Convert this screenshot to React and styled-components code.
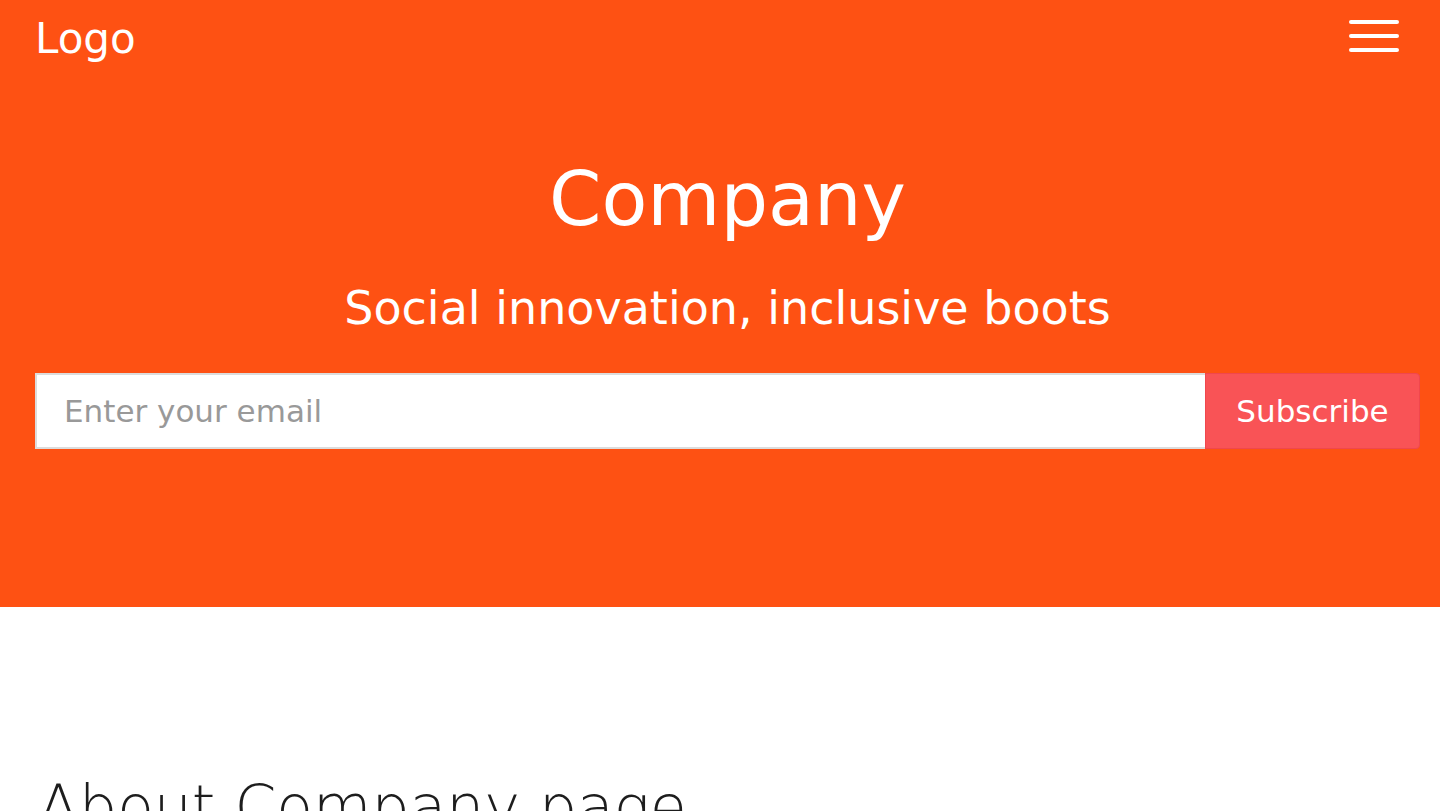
import styled, { createGlobalStyle } from 'styled-components';

const GlobalStyle = createGlobalStyle`
  html, body {
    margin: 0;
    padding: 0;
    background: #ffffff;
    font-family: 'DejaVu Sans', 'Open Sans', sans-serif;
    overflow: hidden;
  }
  * {
    box-sizing: border-box;
  }
`;

function App() {
  return (
    <>
      <GlobalStyle />
      <Hero>
        <NavBar>
          <Logo>Logo</Logo>
          <MenuButton aria-label="Menu">
            <span />
            <span />
            <span />
          </MenuButton>
        </NavBar>
        <HeroContent>
          <Title>Company</Title>
          <Tagline>Social innovation, inclusive boots</Tagline>
          <SubscribeForm onSubmit={(e) => e.preventDefault()}>
            <EmailInput type="email" placeholder="Enter your email" />
            <SubscribeButton type="submit">Subscribe</SubscribeButton>
          </SubscribeForm>
        </HeroContent>
      </Hero>
      <About>
        <AboutTitle>About Company page</AboutTitle>
      </About>
    </>
  );
}

export default App;

const Hero = styled.header`
  background: #fe5113;
  height: 607px;
  padding: 0 20px 0 35px;
  color: #ffffff;
`;

const NavBar = styled.nav`
  display: flex;
  justify-content: space-between;
  align-items: center;
  height: 78px;
  padding-right: 21px;
`;

const Logo = styled.a`
  font-size: 42px;
  line-height: 1;
  font-weight: 400;
  color: #ffffff;
`;

const MenuButton = styled.button`
  display: flex;
  flex-direction: column;
  gap: 10px;
  width: 50px;
  padding: 0;
  background: none;
  border: none;
  margin-top: -6px;

  span {
    display: block;
    height: 4px;
    border-radius: 2px;
    background: #ffffff;
  }
`;

const HeroContent = styled.div`
  display: flex;
  flex-direction: column;
  align-items: center;
  padding-top: 84px;
`;

const Title = styled.h1`
  margin: 0;
  font-size: 75px;
  font-weight: 400;
  line-height: 1;
`;

const Tagline = styled.p`
  margin: 48px 0 0;
  font-size: 46px;
  font-weight: 400;
  line-height: 1;
`;

const SubscribeForm = styled.form`
  display: flex;
  width: 100%;
  margin-top: 42px;
  height: 76px;
`;

const EmailInput = styled.input`
  flex: 1;
  border: 2px solid #dcdcdc;
  border-right: none;
  padding: 0 27px;
  font-family: inherit;
  font-size: 31px;
  font-weight: 400;
  color: #333;
  outline: none;

  &::placeholder {
    color: #999999;
  }
`;

const SubscribeButton = styled.button`
  width: 215px;
  border: 1px solid #f0474d;
  border-radius: 0 4px 4px 0;
  background: #f95356;
  color: #ffffff;
  font-family: inherit;
  font-size: 31px;
  font-weight: 400;
  cursor: pointer;
`;

const About = styled.section`
  padding: 170px 38px 0;
`;

const AboutTitle = styled.h2`
  margin: 0;
  font-size: 60px;
  font-weight: 200;
  color: #1d1d1d;
  line-height: 1;
`;
